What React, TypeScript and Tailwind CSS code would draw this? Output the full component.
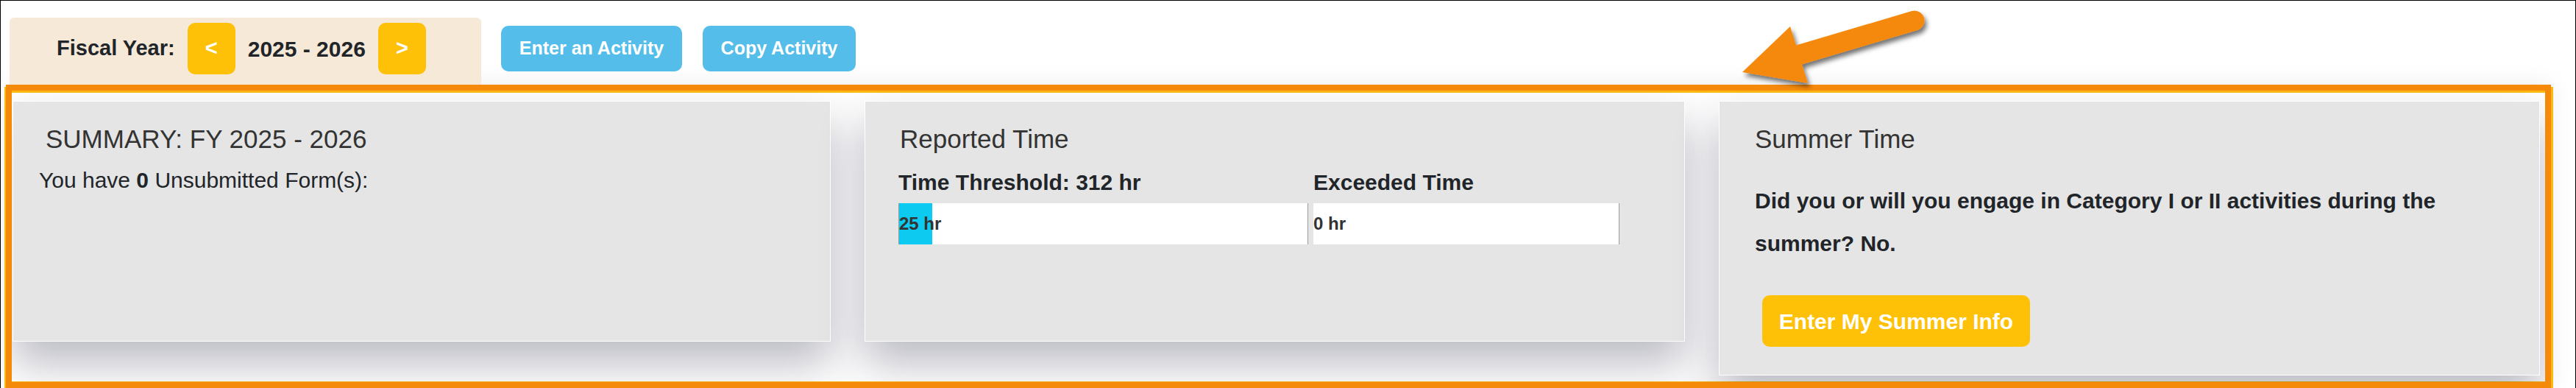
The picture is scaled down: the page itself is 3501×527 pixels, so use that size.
import React from "react";

function Toolbar() {
  return (
    <div className="flex items-start h-[114px] pl-[12px]">
      <div className="mt-[23px] h-[91px] w-[641px] bg-[#f6e9d8] rounded-t-[6px] flex items-start pl-[64px] pt-[7px]">
        <div className="flex items-center gap-[17px] h-[70px]">
          <span className="text-[29px] font-bold text-[#212529]">Fiscal Year:</span>
          <button className="w-[65px] h-[70px] rounded-[10px] bg-[#ffc107] text-white text-[29px] font-bold">
            &lt;
          </button>
          <span className="text-[30px] font-bold text-[#212529]">2025 - 2026</span>
          <button className="w-[65px] h-[70px] rounded-[10px] bg-[#ffc107] text-white text-[29px] font-bold">
            &gt;
          </button>
        </div>
      </div>
      <div className="mt-[34px] ml-[27px] flex gap-[28px]">
        <button className="w-[246px] h-[62px] rounded-[10px] bg-[#55bde9] text-white text-[25px] font-bold">
          Enter an Activity
        </button>
        <button className="w-[208px] h-[62px] rounded-[10px] bg-[#55bde9] text-white text-[25px] font-bold">
          Copy Activity
        </button>
      </div>
    </div>
  );
}

function Arrow() {
  return (
    <svg className="absolute left-[2349px] top-[-1px] w-[290px] h-[140px]" viewBox="0 0 290 140">
      <defs>
        <filter id="arrowShadow" x="-20%" y="-20%" width="150%" height="160%">
          <feDropShadow dx="3" dy="5" stdDeviation="3" floodColor="#000" floodOpacity="0.55" />
        </filter>
      </defs>
      <g filter="url(#arrowShadow)">
        <line x1="252" y1="28" x2="95" y2="74.5" stroke="#f5890a" strokeWidth="27" strokeLinecap="round" />
        <polygon points="18,98 83,36 107,113" fill="#f5890a" />
      </g>
    </svg>
  );
}

const card = "shrink-0 bg-[#e5e5e5] border border-white shadow-[0_30px_55px_rgba(30,30,60,0.3)]";

export default function App() {
  return (
    <div className="relative w-[3501px] h-[527px] overflow-hidden bg-white border-t border-x border-black font-['Liberation_Sans',Arial,Helvetica,sans-serif]">
      <Toolbar />

      <div className="ml-[7px] w-[3459px] h-[412px] border-[8px] border-[#f5890a] bg-white overflow-hidden shadow-[inset_0_3px_0_#fdb913,inset_0_-1px_0_#fdb913,-2px_3px_0_#fdb913,3px_3px_0_#fdb913,0_0_30px_rgba(0,0,0,0.08)] pt-[14px] pl-[1px] pr-[6px] flex items-start gap-[46px]">
        {/* summary */}
        <div className={`${card} w-[1112px] h-[327px] pt-[30px] pl-[35px]`}>
          <h2 className="pl-[9px] text-[35px] leading-[42px] text-[#333]">SUMMARY: FY 2025 - 2026</h2>
          <p className="mt-[12px] text-[30px] leading-[45px] text-[#212529]">
            You have <b>0</b> Unsubmitted Form(s):
          </p>
        </div>

        {/* reported time */}
        <div className={`${card} w-[1115px] h-[327px] pt-[30px] pl-[45px]`}>
          <h2 className="pl-[2px] text-[35px] leading-[42px] text-[#333]">Reported Time</h2>
          <div className="mt-[20px] flex">
            <div className="w-[564px]">
              <div className="text-[30px] leading-[36px] font-bold text-[#212529]">Time Threshold: 312 hr</div>
              <div className="mt-[10px] w-[557px] h-[56px] bg-white border-x border-[#9a9a9a] flex">
                <div className="w-[45px] h-full bg-[#0dcaf0] flex items-center whitespace-nowrap text-[24px] font-bold text-[#333]">
                  25 hr
                </div>
              </div>
            </div>
            <div>
              <div className="text-[30px] leading-[36px] font-bold text-[#212529]">Exceeded Time</div>
              <div className="mt-[10px] w-[416px] h-[56px] bg-white border-r border-[#9a9a9a] flex items-center text-[24px] font-bold text-[#333]">
                0 hr
              </div>
            </div>
          </div>
        </div>

        {/* summer time */}
        <div className={`${card} w-[1116px] h-[373px] pt-[30px] pl-[48px] pr-[40px]`}>
          <h2 className="text-[35px] leading-[42px] text-[#333]">Summer Time</h2>
          <p className="mt-[34px] text-[30px] leading-[58px] font-bold text-[#212529]">
            Did you or will you engage in Category I or II activities during the summer? No.
          </p>
          <button className="mt-[41px] ml-[10px] w-[364px] h-[70px] rounded-[10px] bg-[#ffc107] text-white text-[30px] font-bold">
            Enter My Summer Info
          </button>
        </div>
      </div>

      <Arrow />
    </div>
  );
}
